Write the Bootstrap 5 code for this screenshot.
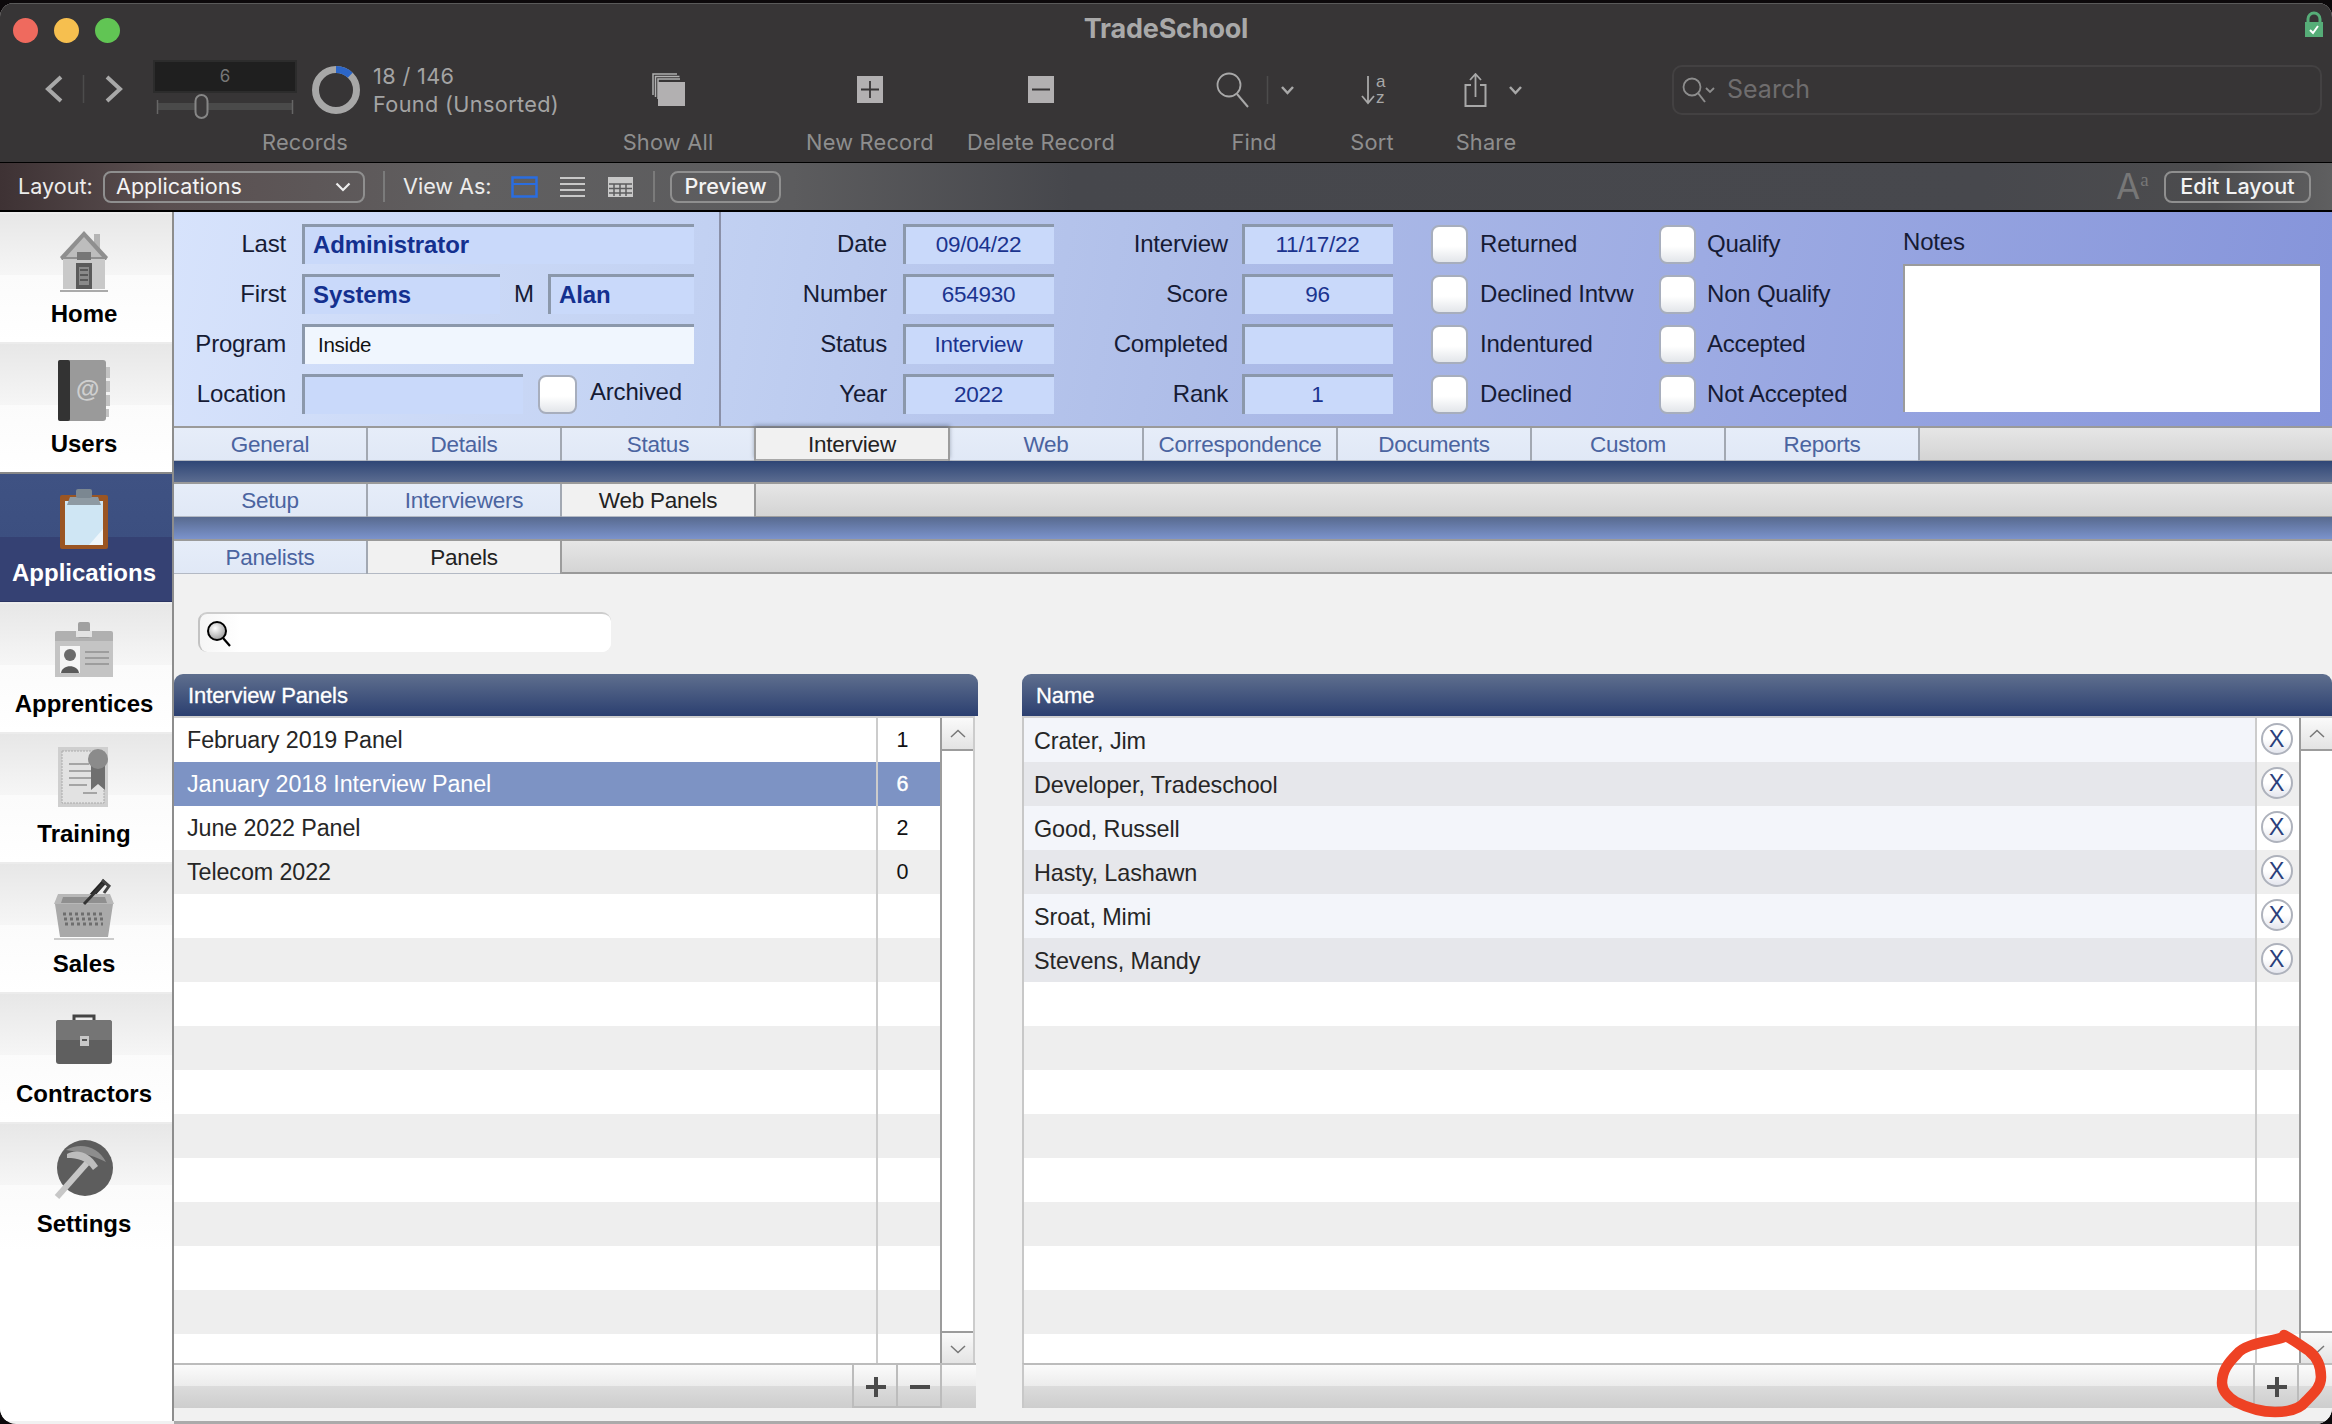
<!DOCTYPE html>
<html lang="en"><head><meta charset="utf-8"><title>TradeSchool</title>
<link href="https://cdn.jsdelivr.net/npm/bootstrap@5.3.0/dist/css/bootstrap.min.css" rel="stylesheet">
<style>
html,body{margin:0;background:#0c090b;width:2332px;height:1424px;overflow:hidden}
body{font-family:"Liberation Sans",Arial,sans-serif}
.win{width:2332px;height:1421px;margin-top:3px;border-radius:14px 14px 16px 16px;overflow:hidden;background:#f1f1f1;position:relative}
.topbar{height:159px;background:#373536;color:#9a9a9a;font-family:Inter,"Liberation Sans",sans-serif;border-top:1px solid #5a5a5a;position:relative}
.lights{position:absolute;left:13px;top:14px;gap:16px}
.light{width:25px;height:25px;border-radius:50%}
.apptitle{height:50px;line-height:49px;text-align:center;font-weight:700;font-size:27px;color:#a9a9a9;letter-spacing:-.2px}
.tools{height:108px}
.tool{display:flex;flex-direction:column;align-items:center;flex:none}
.tool-ic{height:71px;width:100%;display:flex;align-items:center;justify-content:center;gap:0}
.tool-lb{font-size:21.8px;line-height:26px;margin-top:4px;color:#8e8e8e;white-space:nowrap;letter-spacing:.2px}
.t-rec{width:610px}.t-rec .tool-ic{justify-content:flex-start}
.t-all{width:116px}.t-new{width:160px;margin-left:64px}.t-del{width:182px}
.t-find{width:120px;margin-left:62px}.t-sort{width:116px}.t-share{width:112px}
.t-all .tool-ic svg{margin-left:2px}
.t-find .tool-ic svg{margin-left:10px}.t-sort .tool-ic svg{margin-left:12px}.t-share .tool-ic svg{margin-left:16px}
.recnum{width:144px;height:33px;background:#1f1f1f;border:2px solid #2c2c2c;color:#777;font-size:17px;line-height:29px;text-align:center}
.foundtx{font-size:21.7px;line-height:28px;color:#a4a4a4;letter-spacing:.35px;white-space:nowrap;margin-left:13px;margin-top:1px}
.tsearch{position:absolute;left:1672px;top:61px;width:650px;height:50px;border:2px solid #434142;border-radius:10px;color:#6f6d6e;font-size:25px}
.tsearch span{margin-left:7px}
.lockic{position:absolute;left:2304px;top:7px}
.laybar{height:50px;border-top:1px solid #000;border-bottom:2px solid #000;color:#ececec;font-size:21.6px;padding-left:18px;font-family:Inter,"Liberation Sans",sans-serif;background:linear-gradient(90deg,#3e3234 0,#5a4f50 7%,#605f60 20%,#5c5c5e 34%,#46474c 46%,#47484d 85%,#4c4c4e 95%,#5f5f60 100%)}
.lbtn{height:32px;border:2px solid #8f8f8f;border-radius:8px;line-height:27px;padding:0 8px;white-space:nowrap;color:#f4f4f4}
.lsel{width:262px;padding-left:11px}
.laybl{width:85px;flex:none;white-space:nowrap}
.viewas{width:87px;flex:none;margin-left:18px;margin-right:21px;white-space:nowrap}
.lsep{width:2px;height:31px;background:#7b7b7b;margin-left:18px}
.aa{color:#777;font-size:35px;line-height:1;width:48px}
.aa small{font-family:"Liberation Serif",serif;font-size:19px;vertical-align:13px}
.mainarea{height:1209px}
.sidenav{width:174px;flex:none;background:#fff;border-right:2px solid #8d8d8d;height:100%}
.sideitem{height:130px;display:block;padding:0 4px 0 0;position:relative;text-align:center;color:#000;font-weight:700;font-size:24px;background:linear-gradient(180deg,#e7e7e7 0,#f6f6f6 48%,#fbfbfb 48%,#fff 100%);border-top:2px solid #ececec;text-decoration:none}
.sideitem.on{background:linear-gradient(180deg,#3f5283 0,#3c4f80 50%,#354173 50%,#354173 100%);color:#fff;border-top:2px solid #888;border-bottom:1px solid #2a3462}
.side-ic{height:76px;display:flex;align-items:flex-end;justify-content:center}
.side-ic.ic78{height:78px}.side-ic.ic79{height:79px}.side-ic.ic75{height:75px}.side-ic.ic72{height:72px}
.side-lb{display:block;line-height:28px;margin-top:10px;white-space:nowrap}
.ic78+.side-lb{margin-top:8px}.ic79+.side-lb{margin-top:7px}.ic75+.side-lb{margin-top:11px}.ic72+.side-lb{margin-top:14px}
.on .side-lb{margin-top:9px}
.rcol{width:2158px}
.hdrpanel{height:214px;background:linear-gradient(100deg,#d7e3fc 0,#c4d3f3 22%,#aebde8 48%,#9dabe3 70%,#8594da 100%)}
.hleft{width:547px;padding-top:12px;border-right:2px solid #8a90a8;flex:none}
.hright{padding-top:12px;flex:1;position:relative}
.frow{height:40px;margin-bottom:10px;display:flex;align-items:center;flex:none}
.flabel{font-size:24px;color:#161b35;text-align:right;white-space:nowrap;letter-spacing:-.2px;flex:none}
.fbox{height:40px;background:#c9d9fa;border-top:3px solid #8b98ab;border-left:3px solid #8b98ab;color:#1b348f;font-size:22.5px;line-height:36px;text-align:center;flex:none;white-space:nowrap;letter-spacing:-.25px;padding-right:3px}
.fbold{font-weight:700;font-size:24px;text-align:left;padding-left:8px;padding-right:0;color:#14308f;letter-spacing:-.1px}
.fplain{background:#f0f6fe;color:#111;text-align:left;padding-left:13px;padding-right:0;font-size:20.5px}
.tick{width:37px;height:39px;border:2px solid #a7aebd;border-radius:8px;background:linear-gradient(180deg,#fff 55%,#e3e6ea 100%);flex:none}
.tick.a1{margin-left:38px}
.tick.a2{margin-left:15px;width:39px}
.lw112{width:112px}.lw166{width:166px}.lw174{width:174px}
.w151{width:151px}.ms16{margin-left:16px}.ms14{margin-left:14px}.w391{width:392px}
.ckl{font-size:24px;color:#161b35;letter-spacing:-.2px;white-space:nowrap;flex:none}
.ckl.c1{margin-left:12px;width:179px}.ckl.c2{margin-left:11px}
.ckl.c3{margin-left:13px;margin-top:-4px}
.notes{position:absolute;left:1182px;top:0}
.notes-lb{font-size:24px;color:#161b35;line-height:30px;margin-top:15px;letter-spacing:-.2px}
.notes-box{position:absolute;left:0;top:52px;width:417px;height:148px;background:#fff;border-top:2px solid #9b9b9b;border-left:2px solid #9b9b9b}
.tabs{flex-wrap:nowrap;height:35px;border-top:2px solid #9a9a9a;background:linear-gradient(180deg,#e6e6e6,#d3d3d3);box-shadow:inset 0 -1px 0 #9f9f9f}
.tabs .nav-link{width:194px;flex:none;padding:0;height:33px;line-height:33px;text-align:center;background:linear-gradient(180deg,#e6edf9,#e0e8f6);color:#4b64a0;font-size:22.5px;letter-spacing:-.25px;border-right:2px solid #a2a8b2;border-radius:0;box-shadow:inset 0 -1px 0 #b3b9c4}
.tabs .nav-link.active{background:#f1f1f1;color:#222;border-right:2px solid #9c9c9c;position:relative}
.tab-top.tabs .nav-link.active{border-left:2px solid #9c9c9c;margin-left:-2px;width:196px;box-shadow:0 -3px 4px rgba(60,70,90,.4),inset 0 -2px 0 #a8a8a8}
.band1{height:21px;background:linear-gradient(180deg,#2f4676,#5b6c90)}
.band2{height:22px;background:linear-gradient(180deg,#586a8f,#7b93cc)}
.tabs.last{height:36px;border-bottom:0;box-shadow:inset 0 -2px 0 #999}
.workarea{height:848px;background:#f1f1f1;padding-top:38px}
.srch{width:413px;height:40px;margin-left:24px;background:#fff;border-radius:9px;border-top:2px solid #cdcdcd;border-left:2px solid #c3c3c3;position:relative;background-image:linear-gradient(90deg,#f6f6f6 0,#fff 40px)}
.srch svg{position:absolute;left:6px;top:6px}
.panels{margin-top:22px;gap:44px}
.pleft{width:804px;flex:none}.pright{flex:1}
.phead{height:42px;line-height:44px;border-radius:9px 9px 0 0;background:linear-gradient(180deg,#5f6f8e,#2b3f70);color:#fff;font-size:22px;padding-left:14px;letter-spacing:-.1px;-webkit-text-stroke:.3px #fff}
.pbody{height:647px;border-top:2px solid #cfcfcf;overflow:hidden}
.pleft .pbody{margin-right:3px}
.pright .pbody{border-left:2px solid #c8c8c8}
.prows{flex:1;min-width:0}
.prow{height:44px;display:flex;background:#fff}
.prow:nth-child(even){background:#eee}
.prow.sel{background:#7d93c4;color:#fff}
.cn{flex:1;line-height:45px;padding-left:13px;font-size:23.3px;color:#262626;letter-spacing:-.1px;border-right:2px solid #ccc;white-space:nowrap;height:44px}
.prow.sel .cn{color:#fff}
.cc{width:62px;flex:none;text-align:center;line-height:45px;font-size:21.5px;color:#111;padding-right:13px;height:44px}
.prow.sel .cc{color:#fff;-webkit-text-stroke:.4px #fff}
.pright .cn{padding-left:10px;font-size:23.4px;line-height:47px}
.named .cn{background:#f3f5fa}
.named:nth-child(even) .cn{background:#e6e7eb}
.cx{width:42px;flex:none;display:flex;align-items:center;justify-content:center;padding:0 3px 2px 0}
.xbtn{width:32px;height:32px;flex:none;border-radius:50%;border:2px solid #aeb2bc;background:linear-gradient(180deg,#fff 50%,#e4e6ee 100%);color:#2b3f7c;font-size:23.5px;line-height:28px;text-align:center}
.sbar{width:35px;flex:none;background:#fff;border-left:2px solid #9c9c9c;border-right:2px solid #ccc;height:646px;display:flex;flex-direction:column;justify-content:space-between}
.pright .sbar{border-right:0;width:33px}
.sbtn{height:33px;background:linear-gradient(180deg,#fafafa,#e3e3e3);display:flex;align-items:center;justify-content:center}
.sbtn.up{border-bottom:2px solid #9c9c9c}.sbtn.dn{border-top:2px solid #9c9c9c}
.pfoot{height:45px;border-top:2px solid #bcbcbc;background:linear-gradient(180deg,#fbfbfb 0,#ececec 48%,#dcdcdc 48%,#cdcdcd 100%);justify-content:flex-end}
.pleft .pfoot{margin-right:2px;padding-right:34px}
.pright .pfoot{border-left:2px solid #c8c8c8;padding-right:33px}
.fbtn{width:44px;height:43px;border-left:2px solid #bcbcbc;border-bottom:2px solid #bcbcbc;display:flex;align-items:center;justify-content:center;padding:3px 0 0 1px}
.fbtn.endb{border-right:2px solid #bcbcbc;width:46px}
.redmark{position:absolute;left:2210px;top:1322px;pointer-events:none}
.winline{position:absolute;left:174px;right:0;bottom:0;height:3px;background:#aaa}
</style></head>
<body>
<div class="win">
  <div class="topbar">
    <div class="lights d-flex"><span class="light" style="background:#ef6a5e"></span><span class="light" style="background:#f6bf4f"></span><span class="light" style="background:#61c554"></span></div>
    <div class="apptitle">TradeSchool</div>
    <svg class="lockic" width="20" height="27" viewBox="0 0 20 27"><path d="M4 12V8a6 6 0 0 1 12 0v4" fill="none" stroke="#56ad78" stroke-width="3"/><rect x="1" y="11" width="18" height="15" fill="#56ad78"/><path d="M6 19l3 3 5-7" fill="none" stroke="#fff" stroke-width="2"/></svg>
    <div class="tools d-flex">
      <div class="tool t-rec">
        <div class="tool-ic">
          <svg width="153" height="71" viewBox="0 0 153 71"><path d="M61 23L48 35l13 12" fill="none" stroke="#a8a8a8" stroke-width="4"/><path d="M107 23l13 12-13 12" fill="none" stroke="#a8a8a8" stroke-width="4"/><path d="M83.500 21v28" stroke="#4c4c4c" stroke-width="1.500"/></svg>
          <div class="d-flex flex-column" style="width:144px;height:71px;padding-top:6px;position:relative">
            <div class="recnum">6</div>
            <svg width="144" height="28" viewBox="0 0 144 28"><rect x="4" y="10" width="136" height="7" fill="#4a4a4a"/><path d="M4.500 7v14M139.500 7v14" stroke="#666" stroke-width="1.500"/><rect x="42.500" y="2" width="12" height="23" rx="6" fill="#3c3a3b" stroke="#868686" stroke-width="2"/></svg>
          </div>
          <svg style="margin-left:15px" width="48" height="48" viewBox="0 0 48 48"><circle cx="24" cy="24" r="20.500" fill="none" stroke="#a7a7a7" stroke-width="7"/><path d="M24 3.500A20.500 20.500 0 0 1 38.200 9.200" fill="none" stroke="#2c66c8" stroke-width="7"/></svg>
          <div class="foundtx">18 / 146<br>Found (Unsorted)</div>
        </div>
        <div class="tool-lb">Records</div>
      </div>
      <div class="tool t-all">
        <div class="tool-ic"><svg width="34" height="34" viewBox="0 0 34 34"><path d="M1 22V1h24M3.500 24V3.500h24M6 26V6h22" fill="none" stroke="#b0b0b0" stroke-width="1.500"/><rect x="6" y="9" width="27" height="24" fill="#b2b0b1"/></svg></div>
        <div class="tool-lb">Show All</div>
      </div>
      <div class="tool t-new">
        <div class="tool-ic"><svg width="26" height="27" viewBox="0 0 26 27"><rect width="26" height="27" fill="#b2b0b1"/><path d="M13 5v17M4 13.500h18" stroke="#373536" stroke-width="1.800"/></svg></div>
        <div class="tool-lb">New Record</div>
      </div>
      <div class="tool t-del">
        <div class="tool-ic"><svg width="26" height="27" viewBox="0 0 26 27"><rect width="26" height="27" fill="#b2b0b1"/><path d="M4 13.500h18" stroke="#373536" stroke-width="1.800"/></svg></div>
        <div class="tool-lb">Delete Record</div>
      </div>
      <div class="tool t-find">
        <div class="tool-ic"><svg width="88" height="36" viewBox="0 0 88 36"><circle cx="14" cy="13" r="11.500" fill="none" stroke="#a8a8a8" stroke-width="1.800"/><path d="M22 22l11 13" stroke="#a8a8a8" stroke-width="2"/><path d="M52.500 4v28" stroke="#4c4c4c" stroke-width="1.500"/><path d="M67 15l5.500 6 5.500-6" fill="none" stroke="#a8a8a8" stroke-width="2.500"/></svg></div>
        <div class="tool-lb">Find</div>
      </div>
      <div class="tool t-sort">
        <div class="tool-ic"><svg width="36" height="42" viewBox="0 -6 36 42"><path d="M8 1v27M2 21l6 7 6-7" fill="none" stroke="#a8a8a8" stroke-width="1.800"/><text x="16" y="12" font-size="17" fill="#a8a8a8" font-family="Liberation Sans">a</text><text x="16" y="28" font-size="17" fill="#a8a8a8" font-family="Liberation Sans">z</text></svg></div>
        <div class="tool-lb">Sort</div>
      </div>
      <div class="tool t-share">
        <div class="tool-ic"><svg width="66" height="34" viewBox="0 0 66 34"><g transform="translate(3 0)"><path d="M7 12H1.500v21h20V12H16" fill="none" stroke="#a8a8a8" stroke-width="2"/><path d="M11.500 24V2M6 7l5.500-6 5.500 6" fill="none" stroke="#a8a8a8" stroke-width="1.800"/></g><path d="M49 14l5.500 6 5.500-6" fill="none" stroke="#a8a8a8" stroke-width="2.500"/></svg></div>
        <div class="tool-lb">Share</div>
      </div>
    </div>
    <div class="tsearch d-flex align-items-center"><svg class="ms-2" width="38" height="26" viewBox="0 0 38 26"><circle cx="10" cy="10" r="8.500" fill="none" stroke="#8d8d8d" stroke-width="1.800"/><path d="M16 16l7 9" stroke="#8d8d8d" stroke-width="2"/><path d="M24 11l4 4 4-4" fill="none" stroke="#8d8d8d" stroke-width="1.800"/></svg><span>Search</span></div>
  </div>
  <div class="laybar d-flex align-items-center">
    <span class="laybl">Layout:</span>
    <div class="lbtn lsel d-flex justify-content-between align-items-center"><span>Applications</span><svg class="me-1" width="16" height="10" viewBox="0 0 16 10"><path d="M1.500 1.500L8 8l6.500-6.500" fill="none" stroke="#eee" stroke-width="2.200"/></svg></div>
    <span class="lsep"></span>
    <span class="viewas">View As:</span>
    <svg width="122" height="22" viewBox="0 0 122 22"><rect x="1.500" y="1.500" width="24" height="19" fill="none" stroke="#2a6de0" stroke-width="2.500"/><path d="M1.500 8h24" stroke="#2a6de0" stroke-width="2"/><path d="M49 2h25M49 8h25M49 14h25M49 20h25" stroke="#c8c8c8" stroke-width="2"/><rect x="97" y="1" width="25" height="20" fill="#c8c8c8"/><path d="M98 8h23M98 12.500h23M98 17h23M103 8v12M109 8v12M115 8v12" stroke="#5c5c5e" stroke-width="1.500"/></svg>
    <span class="lsep" style="margin-left:20px"></span>
    <div class="lbtn" style="margin-left:15px;width:111px;text-align:center;padding:0;font-weight:500">Preview</div>
    <div class="flex-grow-1"></div>
    <div class="aa">A<small>a</small></div>
    <div class="lbtn" style="width:147px;text-align:center;padding:0;margin-right:21px;font-weight:500">Edit Layout</div>
  </div>
  <div class="mainarea d-flex">
    <nav class="sidenav nav flex-column flex-nowrap">
      <a class="sideitem nav-link" href="#"><span class="side-ic ic78"><svg width="50" height="62" viewBox="0 0 50 62"><path d="M35 4h6v16h-6z" fill="#b5b5b5"/><path d="M25 1L1 27l2 3h44l2-3z" fill="#8f8f8f"/><path d="M25 7L7 27h36z" fill="#bdbdbd"/><path d="M4 29h42v30H4z" fill="#c9c9c9"/><path d="M18 22h14v8H18z" fill="#777"/><path d="M17 33h16v26H17z" fill="#5a5a5a"/><path d="M20 37h10v18H20z" fill="#8a8a8a"/><path d="M21 40h8M21 45h8M21 50h8" stroke="#4a4a4a" stroke-width="1.500"/><path d="M1 60h48v2H1z" fill="#aaa"/></svg></span><span class="side-lb">Home</span></a>
      <a class="sideitem nav-link" href="#"><span class="side-ic ic79"><svg width="54" height="64" viewBox="0 0 54 64"><rect x="1" y="1" width="48" height="61" rx="3" fill="#9a9a9a"/><rect x="1" y="1" width="12" height="61" rx="2" fill="#333"/><path d="M49 8h4v11h-4zM49 22h4v11h-4zM49 36h4v11h-4zM49 50h3v8h-3z" fill="#c2c2c2"/><text x="19" y="38" font-size="24" font-family="Liberation Sans" fill="#cfcfcf">@</text></svg></span><span class="side-lb">Users</span></a>
      <a class="sideitem nav-link on" href="#"><span class="side-ic"><svg width="50" height="62" viewBox="0 0 50 62"><rect x="1" y="7" width="48" height="54" rx="2" fill="#9a5523"/><rect x="6" y="13" width="38" height="44" fill="#cfe6f4"/><path d="M30 57l14-16v16z" fill="#eef6fb"/><path d="M11 9h28l3 8H8z" fill="#8e9aa3"/><rect x="17" y="1" width="16" height="9" rx="2" fill="#7b8791"/></svg></span><span class="side-lb">Applications</span></a>
      <a class="sideitem nav-link" href="#"><span class="side-ic ic75"><svg width="60" height="58" viewBox="0 0 60 58"><rect x="1" y="10" width="58" height="46" rx="2" fill="#b0b0b0"/><rect x="1" y="20" width="58" height="36" fill="#c4c4c4"/><rect x="24" y="1" width="12" height="16" rx="2" fill="#a0a0a0"/><rect x="22" y="10" width="16" height="6" fill="#e2e2e2"/><rect x="6" y="25" width="20" height="27" fill="#f5f5f5"/><circle cx="16" cy="34" r="6" fill="#6b6b6b"/><path d="M7 52c1-9 17-9 18 0z" fill="#5a5a5a"/><path d="M31 31h24M31 37h24M31 43h24" stroke="#9d9d9d" stroke-width="2"/></svg></span><span class="side-lb">Apprentices</span></a>
      <a class="sideitem nav-link" href="#"><span class="side-ic"><svg width="54" height="64" viewBox="0 0 54 64"><rect x="1" y="1" width="50" height="60" fill="#cfcfcf"/><rect x="5" y="5" width="42" height="52" fill="#e2e2e2" stroke="#aaa" stroke-dasharray="2 1"/><path d="M12 18h20M12 25h22M12 32h22M12 39h18M26 47h14" stroke="#a5a5a5" stroke-width="2"/><path d="M34 20h14v24l-7-6-7 6z" fill="#6f6f6f"/><circle cx="41" cy="13" r="10" fill="#8b8b8b"/></svg></span><span class="side-lb">Training</span></a>
      <a class="sideitem nav-link" href="#"><span class="side-ic"><svg width="62" height="62" viewBox="0 0 62 62"><path d="M31 26L52 3" stroke="#222" stroke-width="5" fill="none"/><path d="M49 2l7 6-5 7" stroke="#444" stroke-width="3" fill="none"/><path d="M5 16h52l4 10H1z" fill="#b8b8b8"/><path d="M10 19h42l2 6H8z" fill="#8f8f8f"/><path d="M2 26h58l-5 33H7z" fill="#a9a9a9"/><path d="M10 36h42M11 41h40M12 46h38" stroke="#6e6e6e" stroke-width="3" stroke-dasharray="3 3"/><path d="M1 60h60v2H1z" fill="#ccc"/><path d="M31 26L50 6" stroke="#333" stroke-width="3" fill="none"/></svg></span><span class="side-lb">Sales</span></a>
      <a class="sideitem nav-link" href="#"><span class="side-ic ic72"><svg width="58" height="52" viewBox="0 0 58 52"><path d="M19 7V2h20v5" fill="none" stroke="#444" stroke-width="3"/><rect x="1" y="6" width="56" height="44" rx="3" fill="#5f5f5f"/><path d="M1 9a3 3 0 0 1 3-3h50a3 3 0 0 1 3 3v17H1z" fill="#757575"/><rect x="25" y="22" width="9" height="10" fill="#c8c8c8"/><rect x="27" y="25" width="5" height="2" fill="#555"/></svg></span><span class="side-lb">Contractors</span></a>
      <a class="sideitem nav-link" href="#"><span class="side-ic"><svg width="60" height="60" viewBox="0 0 60 60"><circle cx="31" cy="28" r="28" fill="#5d5d5d"/><path d="M12 10c14-8 32-4 40 12-16-8-28-10-40-12z" fill="#8d8d8d"/><path d="M3 57L33 23" stroke="#c7c7c7" stroke-width="6"/><path d="M13 14c8-5 22-3 31 12l-5 4C32 20 24 18 13 18z" fill="#bdbdbd"/></svg></span><span class="side-lb">Settings</span></a>
    </nav>
    <div class="rcol d-flex flex-column">
      <div class="hdrpanel d-flex">
        <div class="hleft">
          <div class="frow"><span class="flabel lw112">Last</span><span class="fbox fbold ms16 w391">Administrator</span></div>
          <div class="frow"><span class="flabel lw112">First</span><span class="fbox fbold ms16" style="width:198px">Systems</span><span class="flabel" style="margin-left:14px;margin-right:15px;width:19px">M</span><span class="fbox fbold" style="width:146px">Alan</span></div>
          <div class="frow"><span class="flabel lw112">Program</span><span class="fbox fplain ms16 w391">Inside</span></div>
          <div class="frow"><span class="flabel lw112">Location</span><span class="fbox ms16" style="width:221px"></span><span class="tick a2"></span><span class="ckl c3">Archived</span></div>
        </div>
        <div class="hright">
          <div class="frow"><span class="flabel lw166">Date</span><span class="fbox ms16 w151">09/04/22</span><span class="flabel lw174">Interview</span><span class="fbox ms14 w151">11/17/22</span><span class="tick a1"></span><span class="ckl c1">Returned</span><span class="tick"></span><span class="ckl c2">Qualify</span></div>
          <div class="frow"><span class="flabel lw166">Number</span><span class="fbox ms16 w151">654930</span><span class="flabel lw174">Score</span><span class="fbox ms14 w151">96</span><span class="tick a1"></span><span class="ckl c1">Declined Intvw</span><span class="tick"></span><span class="ckl c2">Non Qualify</span></div>
          <div class="frow"><span class="flabel lw166">Status</span><span class="fbox ms16 w151">Interview</span><span class="flabel lw174">Completed</span><span class="fbox ms14 w151"></span><span class="tick a1"></span><span class="ckl c1">Indentured</span><span class="tick"></span><span class="ckl c2">Accepted</span></div>
          <div class="frow"><span class="flabel lw166">Year</span><span class="fbox ms16 w151">2022</span><span class="flabel lw174">Rank</span><span class="fbox ms14 w151">1</span><span class="tick a1"></span><span class="ckl c1">Declined</span><span class="tick"></span><span class="ckl c2">Not Accepted</span></div>
          <div class="notes"><div class="notes-lb">Notes</div><div class="notes-box"></div></div>
        </div>
      </div>
      <nav class="nav tabs tab-top">
        <a class="nav-link" href="#">General</a><a class="nav-link" href="#">Details</a><a class="nav-link" href="#">Status</a><a class="nav-link active" href="#">Interview</a><a class="nav-link" href="#">Web</a><a class="nav-link" href="#">Correspondence</a><a class="nav-link" href="#">Documents</a><a class="nav-link" href="#">Custom</a><a class="nav-link" href="#">Reports</a>
      </nav>
      <div class="band1"></div>
      <nav class="nav tabs">
        <a class="nav-link" href="#">Setup</a><a class="nav-link" href="#">Interviewers</a><a class="nav-link active" href="#">Web Panels</a>
      </nav>
      <div class="band2"></div>
      <nav class="nav tabs last">
        <a class="nav-link" href="#">Panelists</a><a class="nav-link active" href="#">Panels</a>
      </nav>
      <div class="workarea">
        <div class="srch"><svg width="26" height="28" viewBox="0 0 26 28"><defs><radialGradient id="gl" cx=".4" cy=".35" r=".7"><stop offset="0" stop-color="#fff"/><stop offset="1" stop-color="#999"/></radialGradient></defs><circle cx="11" cy="11" r="9" fill="url(#gl)" stroke="#000" stroke-width="2"/><path d="M17 18l7 8" stroke="#000" stroke-width="2.200"/></svg></div>
        <div class="panels d-flex">
          <div class="pleft">
            <div class="phead">Interview Panels</div>
            <div class="pbody d-flex">
              <div class="prows">
                <div class="prow"><span class="cn">February 2019 Panel</span><span class="cc">1</span></div>
                <div class="prow sel"><span class="cn">January 2018 Interview Panel</span><span class="cc">6</span></div>
                <div class="prow"><span class="cn">June 2022 Panel</span><span class="cc">2</span></div>
                <div class="prow"><span class="cn">Telecom 2022</span><span class="cc">0</span></div>
                <div class="prow"><span class="cn"></span><span class="cc"></span></div><div class="prow"><span class="cn"></span><span class="cc"></span></div><div class="prow"><span class="cn"></span><span class="cc"></span></div><div class="prow"><span class="cn"></span><span class="cc"></span></div><div class="prow"><span class="cn"></span><span class="cc"></span></div><div class="prow"><span class="cn"></span><span class="cc"></span></div><div class="prow"><span class="cn"></span><span class="cc"></span></div><div class="prow"><span class="cn"></span><span class="cc"></span></div><div class="prow"><span class="cn"></span><span class="cc"></span></div><div class="prow"><span class="cn"></span><span class="cc"></span></div><div class="prow"><span class="cn"></span><span class="cc"></span></div>
              </div>
              <div class="sbar"><div class="sbtn up"><svg width="16" height="10" viewBox="0 0 16 10"><path d="M1 8l7-6.500L15 8" fill="none" stroke="#777" stroke-width="1.500"/></svg></div><div class="sbtn dn"><svg width="16" height="10" viewBox="0 0 16 10"><path d="M1 2l7 6.500L15 2" fill="none" stroke="#777" stroke-width="1.500"/></svg></div></div>
            </div>
            <div class="pfoot d-flex">
              <div class="fbtn"><svg width="20" height="20" viewBox="0 0 20 20"><path d="M10 0v20M0 10h20" stroke="#4a4a4a" stroke-width="4"/></svg></div>
              <div class="fbtn endb"><svg width="20" height="20" viewBox="0 0 20 20"><path d="M0 10h20" stroke="#4a4a4a" stroke-width="4"/></svg></div>
            </div>
          </div>
          <div class="pright">
            <div class="phead">Name</div>
            <div class="pbody d-flex">
              <div class="prows">
                <div class="prow named"><span class="cn">Crater, Jim</span><span class="cx"><span class="xbtn">X</span></span></div>
                <div class="prow named"><span class="cn">Developer, Tradeschool</span><span class="cx"><span class="xbtn">X</span></span></div>
                <div class="prow named"><span class="cn">Good, Russell</span><span class="cx"><span class="xbtn">X</span></span></div>
                <div class="prow named"><span class="cn">Hasty, Lashawn</span><span class="cx"><span class="xbtn">X</span></span></div>
                <div class="prow named"><span class="cn">Sroat, Mimi</span><span class="cx"><span class="xbtn">X</span></span></div>
                <div class="prow named"><span class="cn">Stevens, Mandy</span><span class="cx"><span class="xbtn">X</span></span></div>
                <div class="prow"><span class="cn"></span><span class="cx"></span></div><div class="prow"><span class="cn"></span><span class="cx"></span></div><div class="prow"><span class="cn"></span><span class="cx"></span></div><div class="prow"><span class="cn"></span><span class="cx"></span></div><div class="prow"><span class="cn"></span><span class="cx"></span></div><div class="prow"><span class="cn"></span><span class="cx"></span></div><div class="prow"><span class="cn"></span><span class="cx"></span></div><div class="prow"><span class="cn"></span><span class="cx"></span></div><div class="prow"><span class="cn"></span><span class="cx"></span></div>
              </div>
              <div class="sbar"><div class="sbtn up"><svg width="16" height="10" viewBox="0 0 16 10"><path d="M1 8l7-6.500L15 8" fill="none" stroke="#777" stroke-width="1.500"/></svg></div><div class="sbtn dn"><svg width="16" height="10" viewBox="0 0 16 10"><path d="M1 2l7 6.500L15 2" fill="none" stroke="#777" stroke-width="1.500"/></svg></div></div>
            </div>
            <div class="pfoot d-flex">
              <div class="fbtn endb"><svg width="20" height="20" viewBox="0 0 20 20"><path d="M10 0v20M0 10h20" stroke="#4a4a4a" stroke-width="4"/></svg></div>
            </div>
          </div>
        </div>
      </div>
    </div>
  </div>
  <div class="winline"></div>
  <svg class="redmark" width="118" height="100" viewBox="0 0 118 100"><path d="M74 12C60 17 36 18 27 29C18 38 12 46 12 58C12 66 18 72 26 77C38 83 50 87 65 87C80 87 90 84 96 76C104 68 111 62 111 52C111 41 108 33 99 26C90 20 82 14 74 10" fill="none" stroke="#ee4224" stroke-width="10.500" stroke-linecap="round"/></svg>
</div>
<script src="https://cdn.jsdelivr.net/npm/bootstrap@5.3.0/dist/js/bootstrap.bundle.min.js"></script>
</body></html>
